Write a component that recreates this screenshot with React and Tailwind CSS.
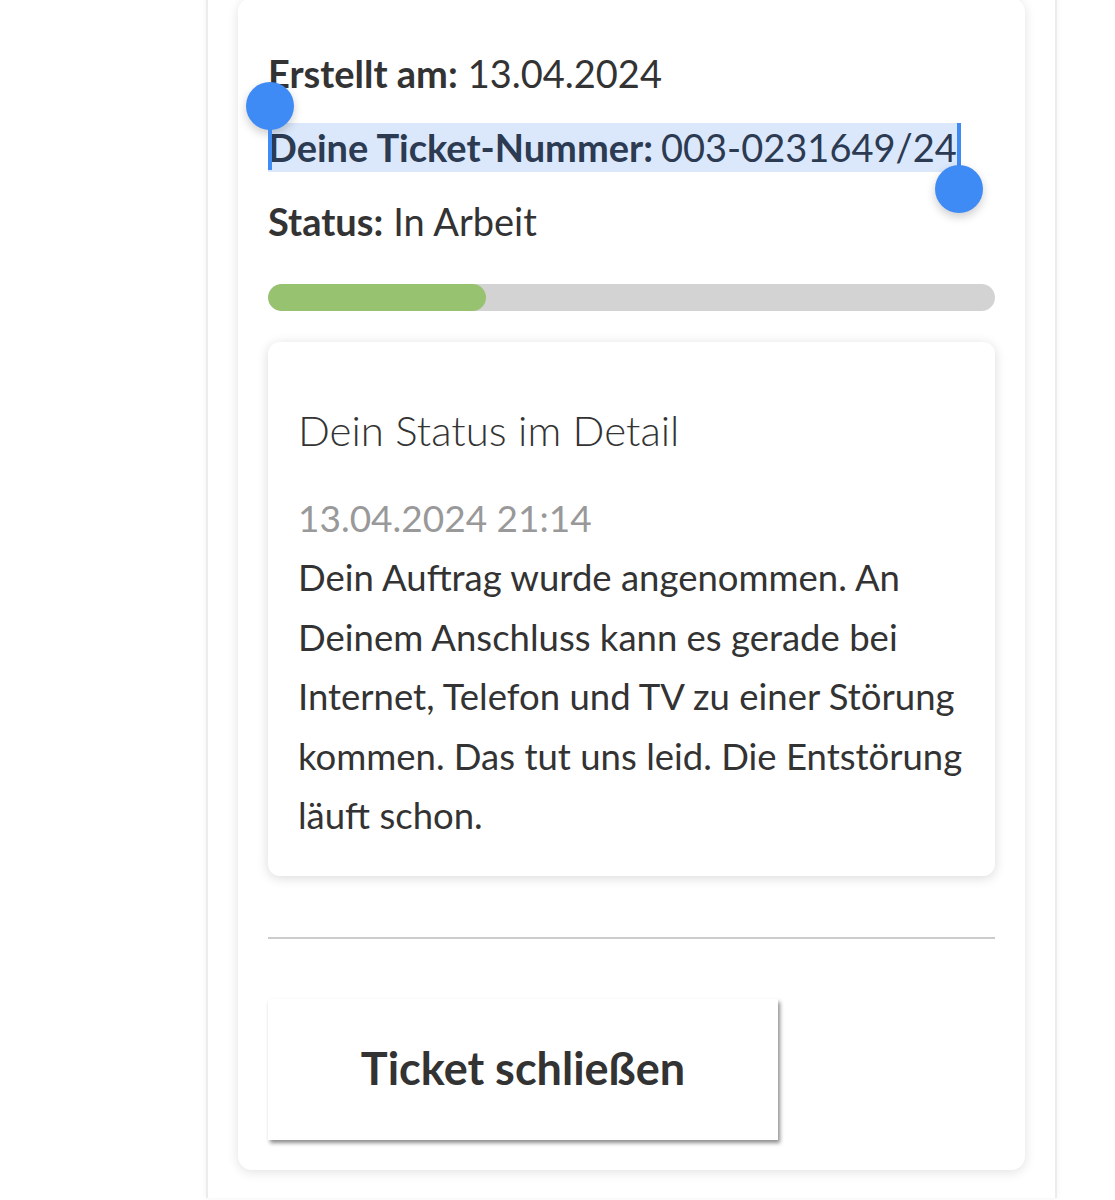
export default function App() {
  const font = { fontFamily: "Lato, 'Open Sans', sans-serif" };

  return (
    <div
      className="min-h-[1200px] w-[1115px] overflow-hidden bg-white text-[#333333]"
      style={font}
    >
      {/* outer panel */}
      <div className="ml-[206px] min-h-[1200px] w-[851px] border-x-2 border-[#ececec] bg-white px-[30px] shadow-[0_0_6px_rgba(0,0,0,0.06)]">
        {/* ticket card */}
        <div className="-mt-[2px] rounded-[14px] bg-white px-[30px] pb-[30px] pt-[38px] shadow-[0_2px_12px_rgba(0,0,0,0.12)]">
          <div className="flex h-[74px] items-center text-[38px]">
            <span className="font-bold">Erstellt am:</span>
            <span className="ml-[10px]">13.04.2024</span>
          </div>

          <div className="flex h-[74px] items-center text-[38px]">
            <span className="relative flex h-[49px] items-center bg-[#dbe8fb] pr-[2px] text-[#2c3a52]">
              <span className="font-bold">Deine Ticket-Nummer:</span>
              <span className="ml-[8px]">003-0231649/24</span>
              {/* selection handles */}
              <span className="absolute left-[-22px] top-[-41px] flex flex-col items-center">
                <span className="h-[48px] w-[48px] rounded-full bg-[#3f8bf5] shadow-[0_4px_10px_rgba(0,0,0,0.2)]" />
                <span className="-mt-[4px] h-[44px] w-[4px] bg-[#3f8bf5]" />
              </span>
              <span className="absolute right-[-24px] top-0 flex flex-col items-center">
                <span className="h-[46px] w-[4px] bg-[#3f8bf5]" />
                <span className="-mt-[4px] h-[48px] w-[48px] rounded-full bg-[#3f8bf5] shadow-[0_4px_10px_rgba(0,0,0,0.2)]" />
              </span>
            </span>
          </div>

          <div className="flex h-[74px] items-center text-[38px]">
            <span className="font-bold">Status:</span>
            <span className="ml-[10px]">In Arbeit</span>
          </div>

          {/* progress */}
          <div className="mt-[26px] h-[27px] w-full overflow-hidden rounded-full bg-[#d3d3d3]">
            <div className="h-full w-[218px] rounded-full bg-[#97c26f]" />
          </div>

          {/* detail card */}
          <div className="mt-[31px] rounded-[12px] bg-white px-[30px] pb-[30px] pt-[60px] shadow-[0_2px_12px_rgba(0,0,0,0.15)]">
            <h2 className="text-[42px] font-light leading-[56px] text-[#333333]">
              Dein Status im Detail
            </h2>
            <p className="mt-[30px] text-[37px] leading-[60px] text-[#999999]">
              13.04.2024 21:14
            </p>
            <p className="text-[36.5px] leading-[59.5px] text-[#333333]">
              Dein Auftrag wurde angenommen. An Deinem Anschluss kann es gerade
              bei Internet, Telefon und TV zu einer Störung kommen. Das tut uns
              leid. Die Entstörung läuft schon.
            </p>
          </div>

          <div className="mt-[61px] h-[2px] w-full bg-[#cccccc]" />

          <button className="mt-[60px] flex h-[141px] w-[510px] items-center justify-center bg-white text-[45px] font-bold text-[#333333] shadow-[2px_3px_4px_rgba(0,0,0,0.45)]">
            Ticket schließen
          </button>
        </div>
      </div>
    </div>
  );
}
